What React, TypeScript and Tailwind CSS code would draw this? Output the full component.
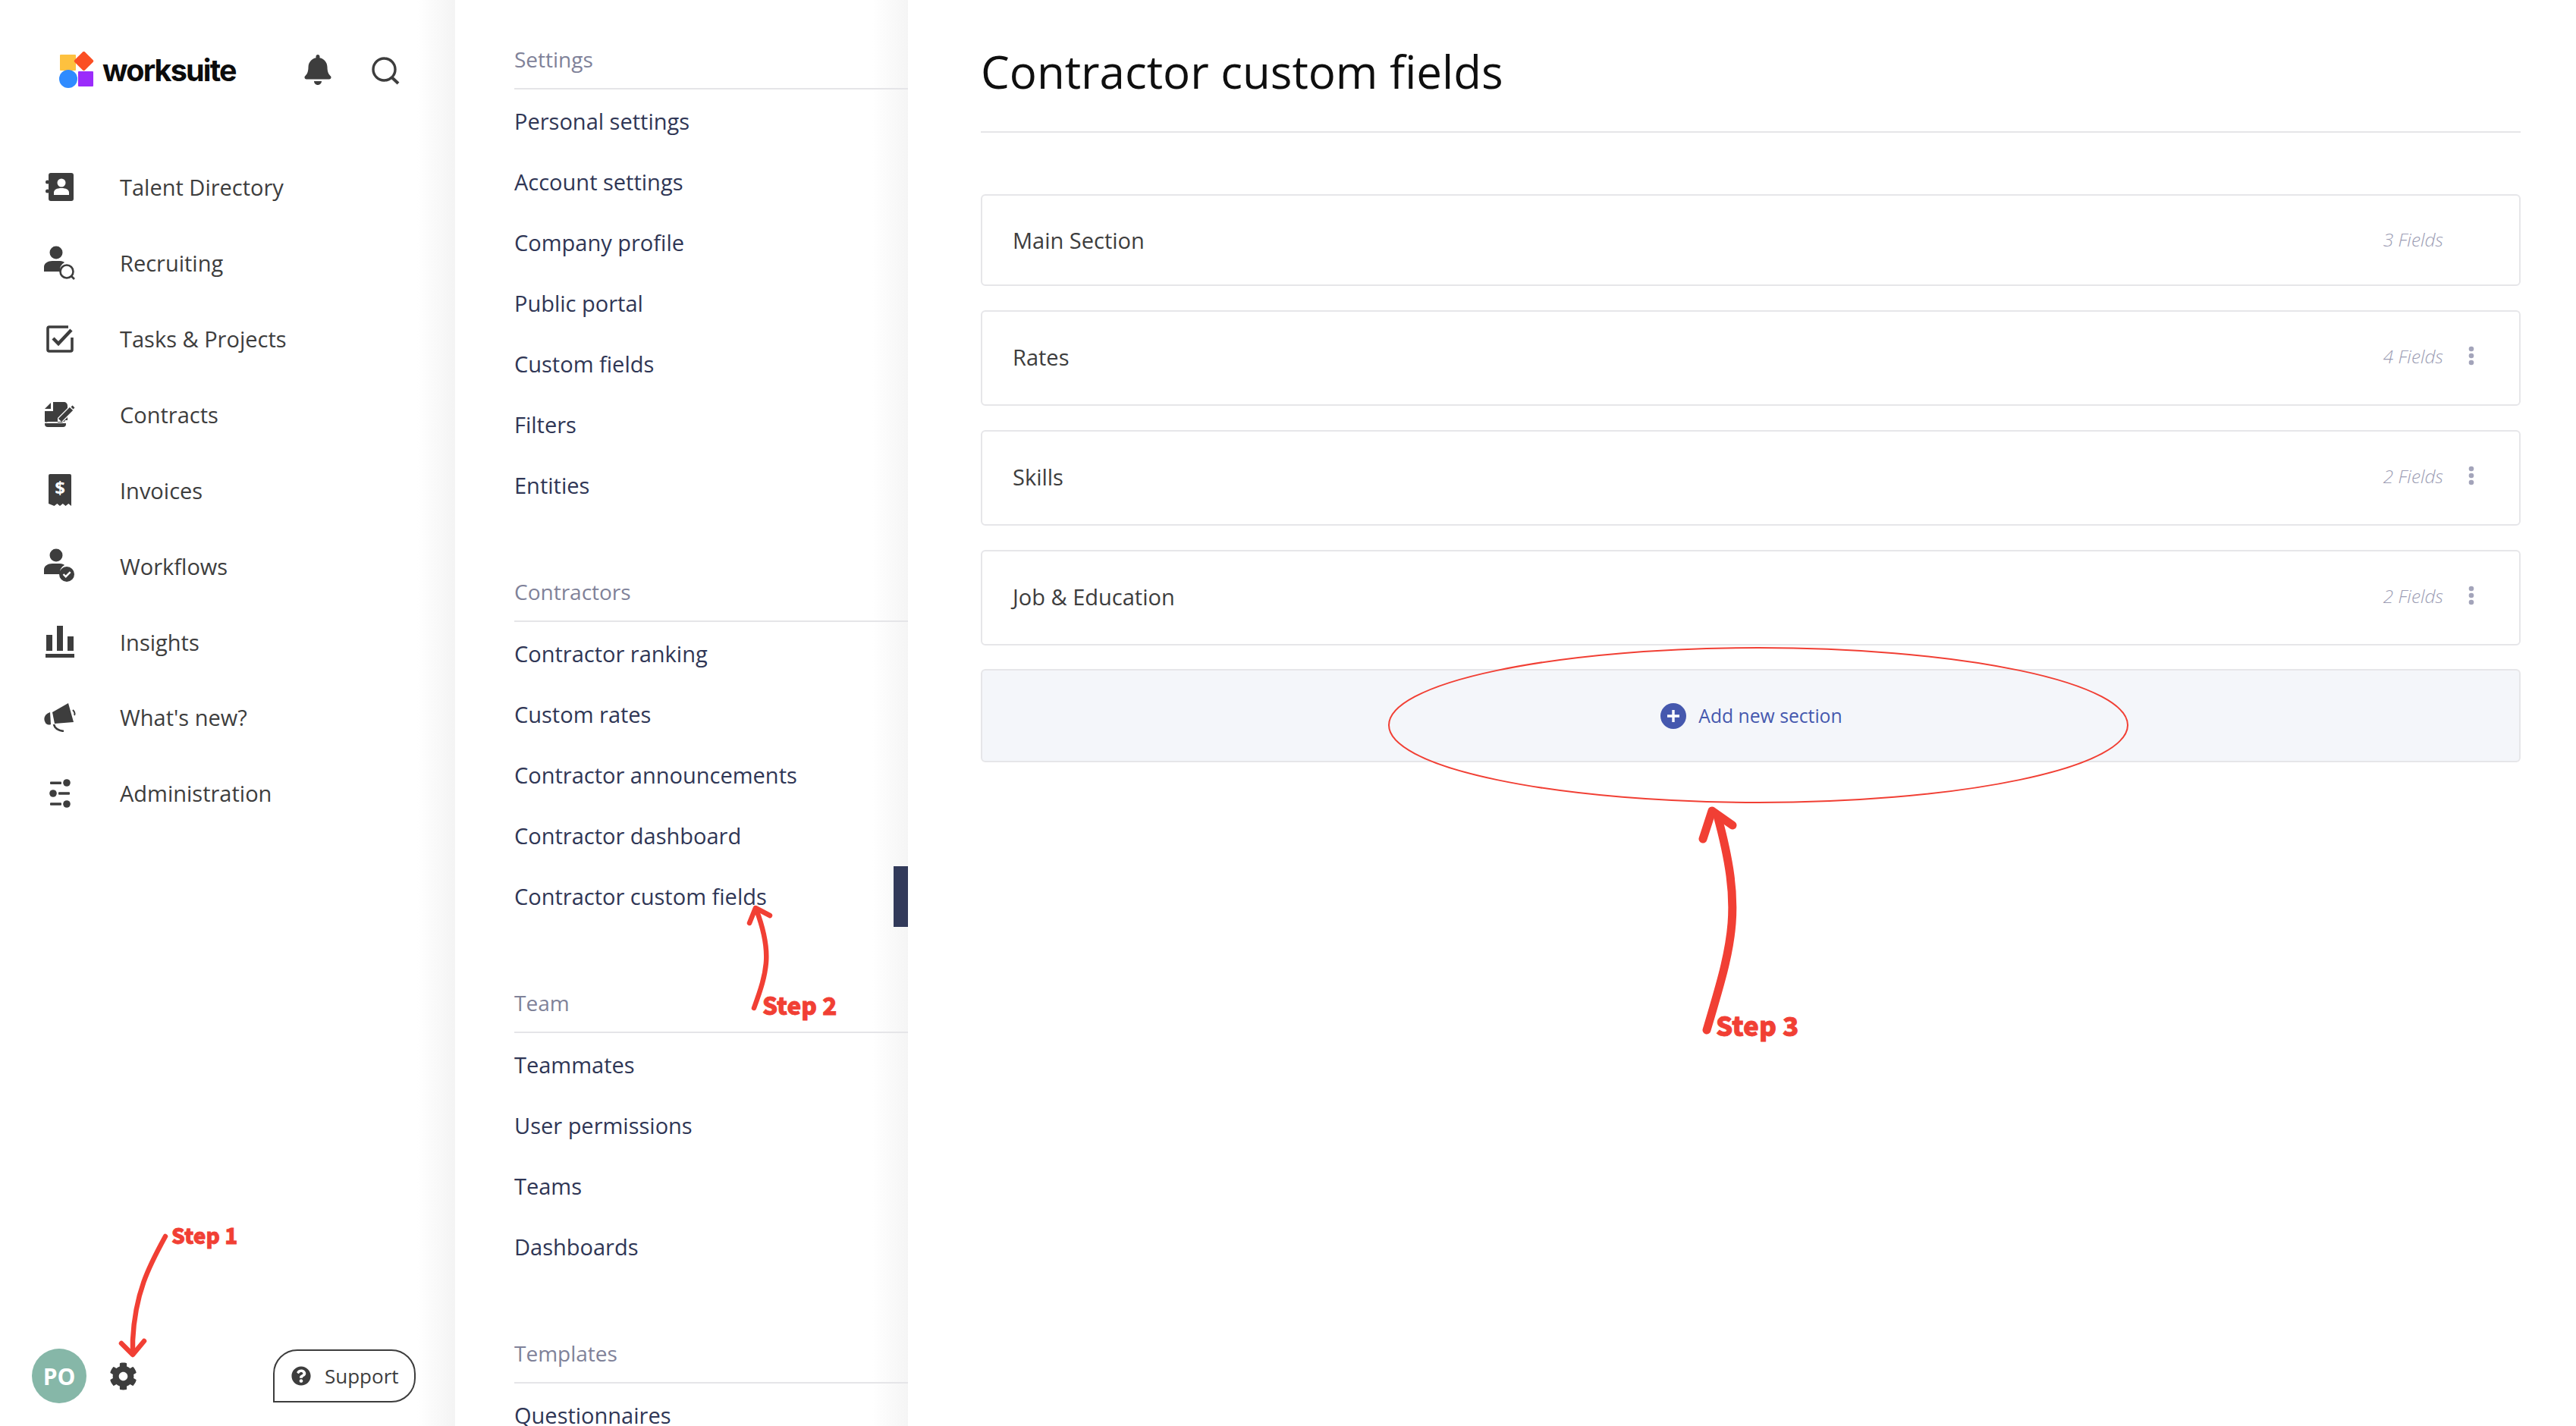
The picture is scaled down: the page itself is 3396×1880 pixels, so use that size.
import { ReactNode } from "react";
import { FaBell, FaCog, FaQuestionCircle } from "react-icons/fa";

const font = "font-['Open_Sans',sans-serif]";

function SearchIcon() {
  return (
    <svg width="38" height="38" viewBox="0 0 38 38" fill="none" stroke="#3d3d3d" strokeWidth="3.4">
      <circle cx="17.5" cy="17.5" r="14.5" />
      <path d="M27.5 28 L36 36" strokeWidth="4" />
    </svg>
  );
}

function DirectoryIcon() {
  return (
    <svg width="38" height="38" viewBox="0 0 38 38">
      <rect x="4" y="0" width="33" height="37" rx="3" fill="#3d3d3d" />
      <circle cx="2.500" cy="12" r="2.500" fill="#3d3d3d" />
      <circle cx="2.500" cy="24" r="2.500" fill="#3d3d3d" />
      <circle cx="21" cy="13" r="5.500" fill="#fff" />
      <path d="M11 29v-3c0-4 4-6 10-6s10 2 10 6v3z" fill="#fff" />
    </svg>
  );
}

function PersonBase({ children }: { children: ReactNode }) {
  return (
    <svg width="42" height="46" viewBox="0 0 42 46" fill="#3d3d3d">
      <circle cx="16" cy="9" r="8.5" />
      <path d="M0 34v-6c0-5 5-8 11-8h10c3 0 5 1 6 2a12 12 0 0 0-6 12z" />
      {children}
    </svg>
  );
}

function RecruitIcon() {
  return (
    <PersonBase>
      <circle cx="30" cy="34" r="8.5" fill="#fff" stroke="#3d3d3d" strokeWidth="2.6" />
      <path d="M36 40l4 4" stroke="#3d3d3d" strokeWidth="2.6" />
    </PersonBase>
  );
}

function WorkflowIcon() {
  return (
    <PersonBase>
      <circle cx="30" cy="34" r="10" />
      <path d="M25.5 34l3.2 3.2 6-6" fill="none" stroke="#fff" strokeWidth="2.4" />
    </PersonBase>
  );
}

function TaskIcon() {
  return (
    <svg width="36" height="36" viewBox="0 0 36 36" fill="none" stroke="#3d3d3d">
      <path d="M29 2H4a2 2 0 0 0-2 2v28a2 2 0 0 0 2 2h28a2 2 0 0 0 2-2V16" strokeWidth="3.6" />
      <path d="M9 17l7 7L33 6" strokeWidth="4.4" />
    </svg>
  );
}

function ContractIcon() {
  return (
    <svg width="40" height="34" viewBox="0 0 40 34" fill="#3d3d3d">
      <path d="M0 9L8 1V9z" />
      <path d="M11 0h14c3 0 5 2 5 5v3L17 21v6h6l7-7v4h-3l-1 2H4a4 4 0 0 1-4 0V12h11z" />
      <path d="M2 28h26v1a4 4 0 0 1-4 4H4a4 4 0 0 1-4-4v-1z" />
      <path d="M20 24l15-15" stroke="#3d3d3d" strokeWidth="6" />
      <path d="M36 8l2-2" stroke="#3d3d3d" strokeWidth="4" />
    </svg>
  );
}

function InvoiceIcon() {
  return (
    <svg width="30" height="44" viewBox="0 0 30 44">
      <path d="M2 0h26a2 2 0 0 1 2 2v40l-3.7-3-3.800 3-3.700-3-3.800 3-3.700-3-3.800 3L0 39V2a2 2 0 0 1 2-2z" fill="#3d3d3d" />
      <text x="15" y="27" textAnchor="middle" fill="#fff" fontSize="24" fontWeight="700" fontFamily="Open Sans">$</text>
    </svg>
  );
}

function InsightIcon() {
  return (
    <svg width="38" height="42" viewBox="0 0 38 42" fill="#3d3d3d">
      <rect x="1" y="12" width="8" height="21" />
      <rect x="15" y="0" width="8" height="33" />
      <rect x="29" y="14" width="8" height="19" />
      <rect x="0" y="37" width="38" height="5" />
    </svg>
  );
}

function MegaphoneIcon() {
  return (
    <svg width="42" height="38" viewBox="0 0 42 38" fill="#3d3d3d">
      <path d="M32 0L39 25 14 27 11 12z" />
      <path d="M8 12C2 14-1 19 1 24s5 5 8 4z" />
      <path d="M13 28c1 5 6 8 13 9" fill="none" stroke="#3d3d3d" strokeWidth="2.600" />
      <path d="M38 9c2 2 3 5 2 7" fill="none" stroke="#3d3d3d" strokeWidth="2" />
    </svg>
  );
}

function AdminIcon() {
  return (
    <svg width="28" height="38" viewBox="0 0 28 38" fill="#3d3d3d">
      <rect x="1" y="3.500" width="15" height="3.400" rx="1" />
      <circle cx="23" cy="5" r="4.800" />
      <circle cx="5" cy="19" r="4.800" />
      <rect x="12" y="17.300" width="15" height="3.400" rx="1" />
      <rect x="1" y="31.300" width="15" height="3.400" rx="1" />
      <circle cx="23" cy="33" r="4.800" />
    </svg>
  );
}

function Logo() {
  return (
    <svg width="48" height="48" viewBox="0 0 48 48">
      <rect x="1" y="4" width="21" height="21" rx="1" fill="#fdc13f" />
      <rect x="23" y="3" width="19" height="19" rx="2" fill="#fb4f24" transform="rotate(45 32.500 12.500)" />
      <circle cx="12" cy="36" r="12" fill="#2f8bff" />
      <rect x="25" y="26" width="20" height="20" rx="1" fill="#9b2cfb" />
    </svg>
  );
}

const mainNav: { label: string; icon: ReactNode }[] = [
  { label: "Talent Directory", icon: <DirectoryIcon /> },
  { label: "Recruiting", icon: <RecruitIcon /> },
  { label: "Tasks & Projects", icon: <TaskIcon /> },
  { label: "Contracts", icon: <ContractIcon /> },
  { label: "Invoices", icon: <InvoiceIcon /> },
  { label: "Workflows", icon: <WorkflowIcon /> },
  { label: "Insights", icon: <InsightIcon /> },
  { label: "What's new?", icon: <MegaphoneIcon /> },
  { label: "Administration", icon: <AdminIcon /> },
];

const settingsGroups = [
  { title: "Settings", items: ["Personal settings", "Account settings", "Company profile", "Public portal", "Custom fields", "Filters", "Entities"] },
  { title: "Contractors", items: ["Contractor ranking", "Custom rates", "Contractor announcements", "Contractor dashboard", "Contractor custom fields"] },
  { title: "Team", items: ["Teammates", "User permissions", "Teams", "Dashboards"] },
  { title: "Templates", items: ["Questionnaires"] },
];

const sections = [
  { name: "Main Section", count: "3 Fields", menu: false, height: "h-[121px]" },
  { name: "Rates", count: "4 Fields", menu: true, height: "h-[126px] pb-[3px]" },
  { name: "Skills", count: "2 Fields", menu: true, height: "h-[126px] pb-[3px]" },
  { name: "Job & Education", count: "2 Fields", menu: true, height: "h-[126px] pb-[3px]" },
];

function Sidebar() {
  return (
    <aside className="flex h-full w-[600px] shrink-0 flex-col bg-[linear-gradient(to_right,#fff_550px,#f4f4f4_598px)]">
      <div className="flex h-[197px] items-start pl-[78px] pt-[68px]">
        <Logo />
        <span className="ml-[9px] mt-[3px] font-['Inter',sans-serif] text-[39.500px] leading-[44px] font-bold tracking-[-1.800px] text-[#0c0c0c]">worksuite</span>
        <span className="ml-[88px] mt-[4px]"><FaBell size={40} color="#3d3d3d" /></span>
        <span className="ml-[50px] mt-[6px]"><SearchIcon /></span>
      </div>
      <nav className="flex flex-col">
        {mainNav.map((item) => (
          <div key={item.label} className="flex h-[99.900px] items-center pl-[54px]">
            <span className="flex w-[50px] justify-center">{item.icon}</span>
            <span className="ml-[54px] text-[29px] font-medium text-[#3d3d3d]">{item.label}</span>
          </div>
        ))}
      </nav>
      <div className="mt-auto flex items-center pb-[30px] pl-[42px]">
        <div className="flex h-[72px] w-[72px] items-center justify-center rounded-full bg-[#86b7a8] text-[30px] font-bold text-white">PO</div>
        <span className="ml-[30px]"><FaCog size={37} color="#3d3d3d" /></span>
        <button className="ml-[179px] flex h-[70px] w-[188px] items-center rounded-[32px] rounded-bl-none border-2 border-[#3d3d3d] pl-[22px] text-[26px] text-[#3d3d3d]">
          <FaQuestionCircle size={26} color="#3d3d3d" />
          <span className="ml-[18px]">Support</span>
        </button>
      </div>
    </aside>
  );
}

function SettingsPanel() {
  return (
    <section className="h-full w-[597px] shrink-0 overflow-hidden bg-[linear-gradient(to_right,#fff_550px,#f5f5f5_597px)] pl-[78px] pt-[56px]">
      {settingsGroups.map((group) => (
        <div key={group.title} className="mb-[78px]">
          <div className="flex h-[62px] items-start border-b-2 border-[#e5e5e8] text-[28px] leading-[44px] text-[#7f8299]">{group.title}</div>
          <ul className="pt-[2px]">
            {group.items.map((item) => {
              const active = item === "Contractor custom fields";
              return (
                <li key={item} className="relative flex h-[80px] items-center text-[29px] font-medium text-[#2f3655]">
                  {item}
                  {active && <span className="absolute right-0 top-0 h-[80px] w-[19px] bg-[#323a5a]" />}
                </li>
              );
            })}
          </ul>
        </div>
      ))}
    </section>
  );
}

function SectionCard({ name, count, menu, height }: { name: string; count: string; menu: boolean; height: string }) {
  return (
    <div className={`flex ${height} items-center rounded-[6px] border-2 border-[#e6e6e9] bg-white pl-[40px]`}>
      <span className="text-[29px] font-medium text-[#3d3d3d]">{name}</span>
      <span className="ml-auto text-[24.500px] font-light italic text-[#9c9db4]">{count}</span>
      <span className="flex w-[100px] justify-start pb-[3px] pl-[32px]">
        {menu && (
          <svg width="10" height="26" viewBox="0 0 10 26" fill="#a3a4ba">
            <circle cx="5" cy="4" r="3.300" />
            <circle cx="5" cy="13" r="3.300" />
            <circle cx="5" cy="22" r="3.300" />
          </svg>
        )}
      </span>
    </div>
  );
}

function MainContent() {
  return (
    <main className="h-full flex-1 pl-[96px] pr-[73px]">
      <div className="flex h-[175px] items-start border-b-2 border-[#e5e5e8] pt-[50px]">
        <h1 className="text-[60px] leading-[88px] text-[#0f0f0f]">Contractor custom fields</h1>
      </div>
      <div className="mt-[81px] flex flex-col gap-[32px]">
        {sections.map((s) => (
          <SectionCard key={s.name} {...s} />
        ))}
        <div className="-mt-[1px] flex h-[123px] items-center justify-center rounded-[6px] border-2 border-[#e6e6e9] bg-[#f4f6fa] pl-[2px] text-[24.700px] text-[#4558ae]">
          <svg width="34" height="34" viewBox="0 0 34 34">
            <circle cx="17" cy="17" r="17" fill="#4558ae" />
            <path d="M17 9v16M9 17h16" stroke="#fff" strokeWidth="3.400" />
          </svg>
          <span className="ml-[16px]">Add new section</span>
        </div>
      </div>
    </main>
  );
}

// red tutorial marks drawn on top of the page
function Annotations() {
  const step = "absolute font-['Noto_Sans_CJK_JP',sans-serif] font-black leading-none text-[#f13f34] [-webkit-text-stroke:0.8px_#f13f34]";
  return (
    <>
      <svg className="pointer-events-none absolute left-0 top-0" width="3396" height="1880" fill="none" stroke="#f13f34" strokeLinecap="round" strokeLinejoin="round">
        <g strokeWidth="6.500">
          <path d="M218 1630 C196 1670 178 1705 175 1767 L175 1785" />
          <path d="M160 1771 L175 1786 L190 1768" />
          <path d="M994 1329 C1012 1280 1018 1255 997 1199" />
          <path d="M988 1217 L996 1197 L1015 1207" />
        </g>
        <ellipse cx="2318" cy="956" rx="487" ry="102" strokeWidth="2" />
        <g strokeWidth="11">
          <path d="M2250 1358 C2285 1240 2298 1200 2264 1075" />
          <path d="M2245 1106 L2257 1069 L2284 1088" />
        </g>
      </svg>
      <span className={`${step} left-[226px] top-[1614px] text-[28px]`}>Step 1</span>
      <span className={`${step} left-[1005px] top-[1309px] text-[31.500px]`}>Step 2</span>
      <span className={`${step} left-[2262px] top-[1333px] text-[35px]`}>Step 3</span>
    </>
  );
}

export default function App() {
  return (
    <div className={`relative flex h-[1880px] w-[3396px] overflow-hidden bg-white ${font}`}>
      <Sidebar />
      <SettingsPanel />
      <MainContent />
      <Annotations />
    </div>
  );
}
